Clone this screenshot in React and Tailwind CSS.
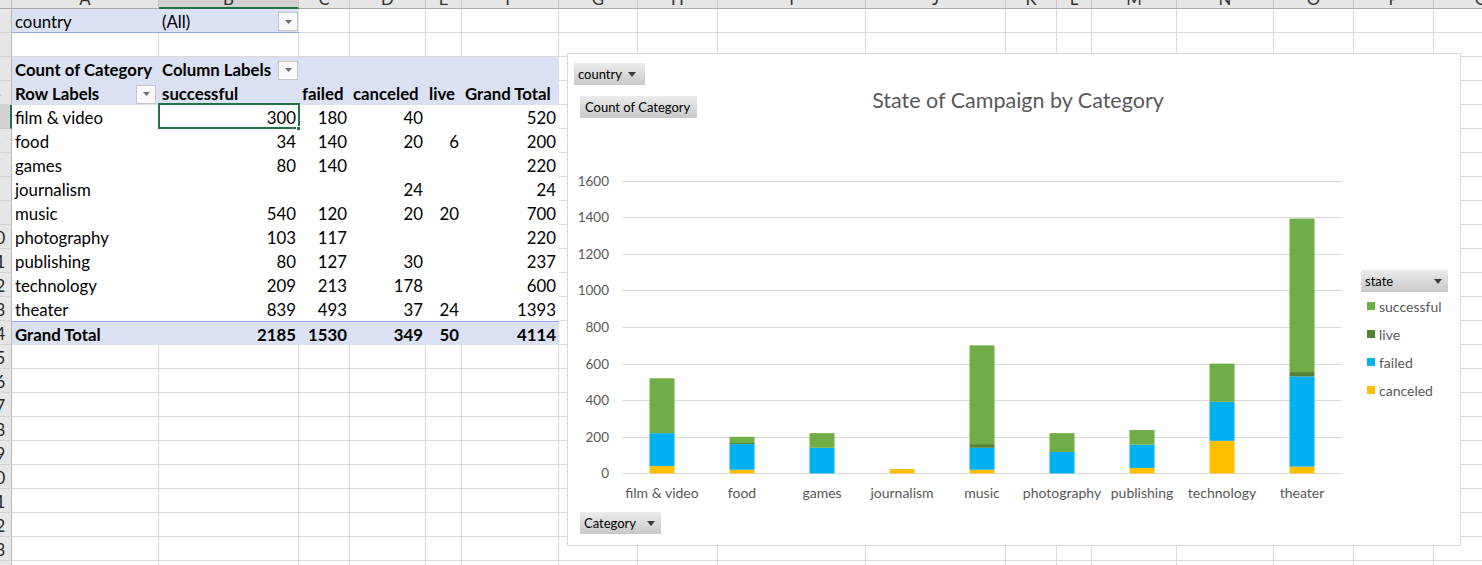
import React from "react";

const W = [
  "w-[147px]", "w-[140px]", "w-[51px]", "w-[76px]", "w-[36px]", "w-[97px]",
  "w-[79px]", "w-[80px]", "w-[148px]", "w-[140px]", "w-[51px]", "w-[35px]",
  "w-[85px]", "w-[97px]", "w-[80px]", "w-[80px]", "w-[96px]",
];
const LETTERS = "ABCDEFGHIJKLMNOPQ".split("");

const TABLE = [
  ["film & video", 300, 180, 40, "", 520],
  ["food", 34, 140, 20, 6, 200],
  ["games", 80, 140, "", "", 220],
  ["journalism", "", "", 24, "", 24],
  ["music", 540, 120, 20, 20, 700],
  ["photography", 103, 117, "", "", 220],
  ["publishing", 80, 127, 30, "", 237],
  ["technology", 209, 213, 178, "", 600],
  ["theater", 839, 493, 37, 24, 1393],
];
const TOTALS = [2185, 1530, 349, 50, 4114];

// canceled, failed, live, successful (bottom -> top)
const CHART = [
  ["film & video", 40, 180, 0, 300],
  ["food", 20, 140, 6, 34],
  ["games", 0, 140, 0, 80],
  ["journalism", 24, 0, 0, 0],
  ["music", 20, 120, 20, 540],
  ["photography", 0, 117, 0, 103],
  ["publishing", 30, 127, 0, 80],
  ["technology", 178, 213, 0, 209],
  ["theater", 37, 493, 24, 839],
];
const COLORS = ["#FFC000", "#00B0F0", "#548235", "#70AD47"];

function DropBtn() {
  return (
    <div className="w-[20px] h-[19px] shrink-0 border border-[#c6c6c6] bg-[#f9f9f9] flex items-center justify-center">
      <svg width="7" height="4" viewBox="0 0 7 4">
        <path d="M0 0H7L3.5 4Z" fill="#707070" />
      </svg>
    </div>
  );
}

function Tri() {
  return (
    <svg width="8" height="5" viewBox="0 0 8 5" className="shrink-0">
      <path d="M0 0H8L4 5Z" fill="#3a3a3a" />
    </svg>
  );
}

function RowHeader({ n, sel }) {
  return (
    <div
      className={`w-[12px] shrink-0 h-full overflow-hidden border-b ${
        sel
          ? "bg-[#d2d2d2] border-r-2 border-r-[#217346] border-b-[#c6c6c6]"
          : "bg-[#e6e6e6] border-r border-r-[#b8b8b8] border-b-[#d4d4d4]"
      }`}
    >
      <div className="ml-[-21px] mt-[1px] w-[33px] text-center leading-[23px] text-[#262626]">{n}</div>
    </div>
  );
}

function Blank({ i }) {
  return <div className={`${W[i]} shrink-0 h-full border-r border-b border-[#dadada]`} />;
}

function Row({ n, sel, cells = [] }) {
  return (
    <div className="flex h-[24px]">
      <RowHeader n={n} sel={sel} />
      {cells}
      {W.map((_, i) => (i >= cells.length ? <Blank key={i} i={i} /> : null))}
    </div>
  );
}

function P({ i, className = "", children }) {
  return (
    <div className={`${W[i]} shrink-0 h-full flex items-center whitespace-nowrap pt-[2px] ${className}`}>
      {children}
    </div>
  );
}

function ChartBtn({ label, tri, className = "" }) {
  return (
    <div
      className={`flex items-center h-[22px] bg-linear-to-b from-[#ececec] to-[#c8c8c8] text-[13px] text-black leading-none ${className}`}
    >
      <span>{label}</span>
      {tri ? <Tri /> : null}
    </div>
  );
}

function Chart() {
  const k = 0.18294;
  const base = 309.4;
  const yOf = (v) => base - v * k;
  return (
    <div className="absolute left-[567px] top-[53px] w-[894px] h-[493px] border border-[#d9d9d9] bg-white flex flex-col font-['Lato',sans-serif]">
      <div className="h-[110px] grid grid-cols-[1fr_auto_1fr]">
        <div className="flex flex-col items-start">
          <ChartBtn label="country" tri className="ml-[6px] mt-[9px] w-[71px] pl-[4px] pr-[9px] justify-between" />
          <ChartBtn label="Count of Category" className="ml-[12px] mt-[11px] w-[117px] pl-[5px]" />
        </div>
        <div className="pt-[33px] pl-[8px] text-[21.5px] leading-[26px] text-[#595959] whitespace-nowrap">
          State of Campaign by Category
        </div>
        <div />
      </div>
      <div className="flex h-[345px]">
        <svg width="790" height="345" viewBox="0 0 790 345" className="shrink-0">
          {[0, 200, 400, 600, 800, 1000, 1200, 1400, 1600].map((v) => (
            <g key={v}>
              <line x1="54" x2="774" y1={Math.round(yOf(v)) + 0.5} y2={Math.round(yOf(v)) + 0.5} stroke="#d9d9d9" strokeWidth="1" />
              <text
                x="41"
                y={yOf(v)}
                textAnchor="end"
                dominantBaseline="central"
                fontFamily="Lato, sans-serif"
                fontSize="13.5"
                fill="#595959"
              >
                {v}
              </text>
            </g>
          ))}
          {CHART.map((row, ci) => {
            const cx = 94 + 80 * ci;
            let cur = base;
            const rects = [];
            for (let s = 0; s < 4; s++) {
              const v = row[s + 1];
              if (!v) continue;
              const h = v * k;
              rects.push(<rect key={s} x={cx - 12.5} y={cur - h} width="25" height={h} fill={COLORS[s]} />);
              cur -= h;
            }
            return (
              <g key={row[0]}>
                {rects}
                <text
                  x={cx}
                  y="328"
                  textAnchor="middle"
                  dominantBaseline="central"
                  fontFamily="Lato, sans-serif"
                  fontSize="14"
                  fill="#595959"
                >
                  {row[0]}
                </text>
              </g>
            );
          })}
        </svg>
        <div className="ml-[3px] pt-[106px] flex flex-col">
          <ChartBtn label="state" tri className="w-[87px] pl-[4px] pr-[6px] justify-between" />
          {[
            ["successful", "bg-[#70AD47]"],
            ["live", "bg-[#548235]"],
            ["failed", "bg-[#00B0F0]"],
            ["canceled", "bg-[#FFC000]"],
          ].map(([t, c]) => (
            <div key={t} className="h-[28px] flex items-center pl-[6px] gap-[4px] text-[14px] text-[#595959]">
              <div className={`w-[8px] h-[8px] ${c}`} />
              <span>{t}</span>
            </div>
          ))}
        </div>
      </div>
      <div className="mt-[3px]">
        <ChartBtn label="Category" tri className="ml-[12px] w-[81px] pl-[4px] pr-[6px] justify-between" />
      </div>
    </div>
  );
}

const BLUE = "bg-[#d9e1f2]";

export default function App() {
  const rows = [];
  rows.push(
    <Row
      key={1}
      n={1}
      cells={[
        <P key="a" i={0} className={`${BLUE} border-b border-[#8ea9db] pl-[3px]`}>country</P>,
        <P key="b" i={1} className={`${BLUE} border-b border-[#8ea9db] pl-[3px] pr-[1px] justify-between`}>
          <span>(All)</span>
          <DropBtn />
        </P>,
      ]}
    />
  );
  rows.push(<Row key={2} n={2} />);
  rows.push(
    <Row
      key={3}
      n={3}
      cells={[
        <P key="a" i={0} className={`${BLUE} pl-[3px] font-bold`}>Count of Category</P>,
        <P key="b" i={1} className={`${BLUE} pl-[3px] pr-[1px] justify-between font-bold`}>
          <span>Column Labels</span>
          <DropBtn />
        </P>,
        <P key="c" i={2} className={BLUE} />,
        <P key="d" i={3} className={BLUE} />,
        <P key="e" i={4} className={BLUE} />,
        <P key="f" i={5} className={BLUE} />,
      ]}
    />
  );
  rows.push(
    <Row
      key={4}
      n={4}
      cells={[
        <P key="a" i={0} className={`${BLUE} pl-[3px] pr-[3px] justify-between font-bold`}>
          <span>Row Labels</span>
          <DropBtn />
        </P>,
        <P key="b" i={1} className={`${BLUE} pl-[3px] font-bold`}>successful</P>,
        <P key="c" i={2} className={`${BLUE} pl-[3px] font-bold`}>failed</P>,
        <P key="d" i={3} className={`${BLUE} pl-[3px] font-bold`}>canceled</P>,
        <P key="e" i={4} className={`${BLUE} pl-[3px] font-bold`}>live</P>,
        <P key="f" i={5} className={`${BLUE} pl-[3px] font-bold`}>Grand Total</P>,
      ]}
    />
  );
  TABLE.forEach((r, idx) => {
    const n = 5 + idx;
    const cells = [
      <P key="a" i={0} className="pl-[3px]">{r[0]}</P>,
      ...r.slice(1).map((v, j) => (
        <P key={j} i={j + 1} className={`justify-end pr-[3px] ${idx === 0 && j === 0 ? "relative" : ""}`}>
          {v}
          {idx === 0 && j === 0 ? (
            <>
              <div className="absolute left-[-1px] top-[-2px] w-[142px] h-[26px] border-2 border-[#217346]" />
              <div className="absolute left-[137px] top-[21px] w-[5px] h-[5px] bg-[#217346] border border-white" />
            </>
          ) : null}
        </P>
      )),
    ];
    rows.push(<Row key={n} n={n} sel={n === 5} cells={cells} />);
  });
  rows.push(
    <Row
      key={14}
      n={14}
      cells={[
        <P key="a" i={0} className={`${BLUE} border-t border-[#8ea9db] pl-[3px] font-bold`}>Grand Total</P>,
        ...TOTALS.map((v, j) => (
          <P key={j} i={j + 1} className={`${BLUE} border-t border-[#8ea9db] justify-end pr-[3px] font-bold`}>
            {v}
          </P>
        )),
      ]}
    />
  );
  for (let n = 15; n <= 24; n++) rows.push(<Row key={n} n={n} />);

  return (
    <div className="relative w-[1482px] h-[565px] overflow-hidden bg-white font-['Lato',sans-serif] text-[16.8px] text-black">
      <div className="flex h-[9px]">
        <div className="w-[12px] shrink-0 bg-[#e6e6e6] border-r border-b border-r-[#b8b8b8] border-b-[#ababab]" />
        {W.map((w, i) => (
          <div
            key={i}
            className={`${w} shrink-0 overflow-hidden border-r border-r-[#c6c6c6] ${
              i === 1
                ? "bg-[#d2d2d2] border-b-2 border-b-[#217346]"
                : "bg-[#e6e6e6] border-b border-b-[#ababab]"
            }`}
          >
            <div className="mt-[-10px] text-center leading-[17px] text-[#333]">{LETTERS[i]}</div>
          </div>
        ))}
      </div>
      {rows}
      <Chart />
    </div>
  );
}
